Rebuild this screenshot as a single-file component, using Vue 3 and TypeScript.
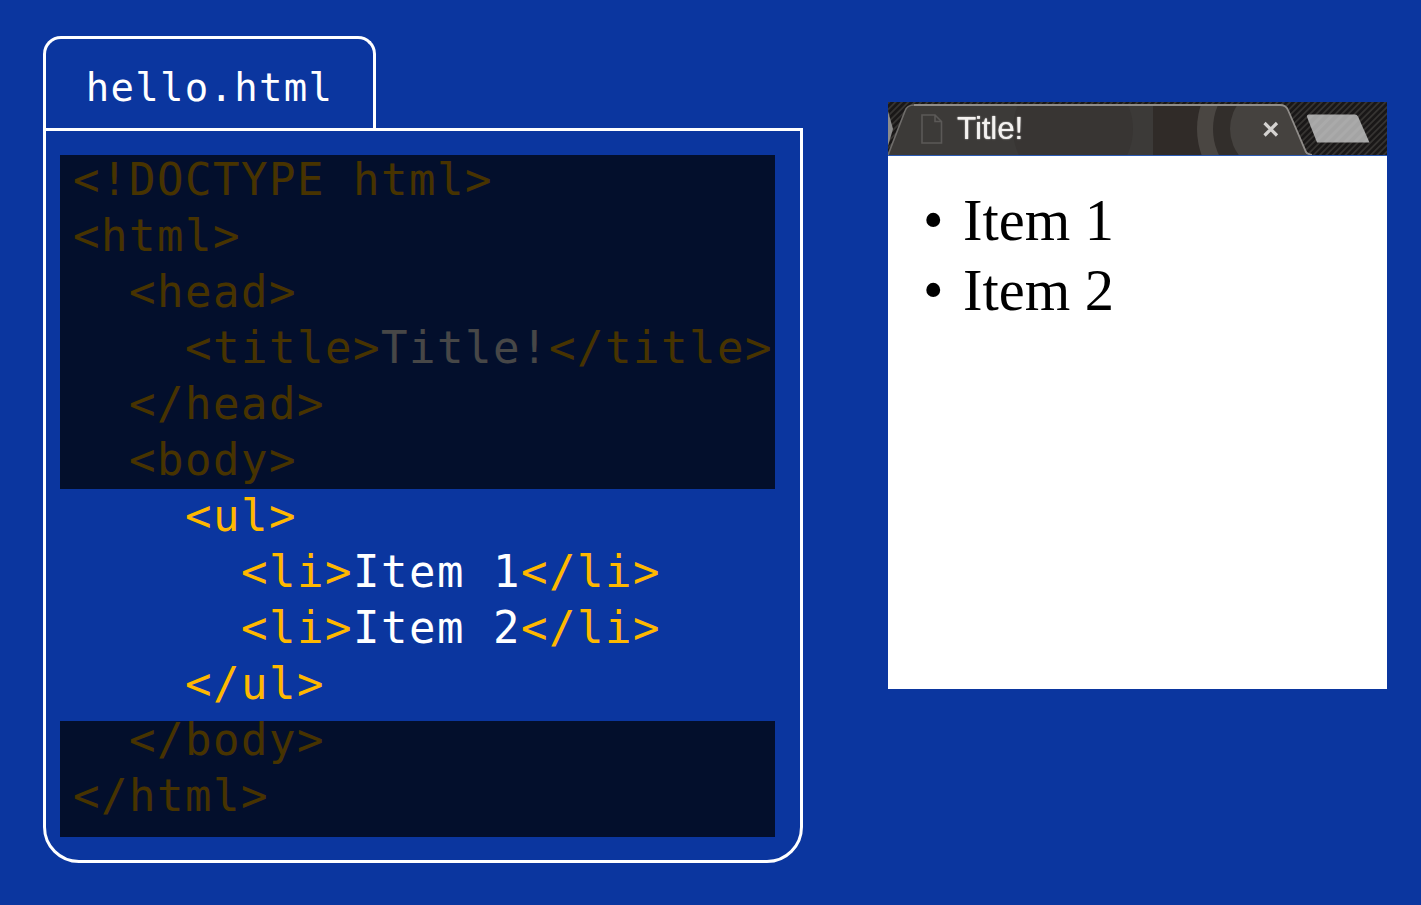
<script setup lang="ts">
interface Seg { text: string; kind: 'tag' | 'text' }
interface Line { indent: number; segs: Seg[] }
const t = (text: string): Seg => ({ text, kind: 'tag' })
const x = (text: string): Seg => ({ text, kind: 'text' })
const lines: Line[] = [
  { indent: 0, segs: [t('<!DOCTYPE html>')] },
  { indent: 0, segs: [t('<html>')] },
  { indent: 2, segs: [t('<head>')] },
  { indent: 4, segs: [t('<title>'), x('Title!'), t('</title>')] },
  { indent: 2, segs: [t('</head>')] },
  { indent: 2, segs: [t('<body>')] },
  { indent: 4, segs: [t('<ul>')] },
  { indent: 6, segs: [t('<li>'), x('Item 1'), t('</li>')] },
  { indent: 6, segs: [t('<li>'), x('Item 2'), t('</li>')] },
  { indent: 4, segs: [t('</ul>')] },
  { indent: 2, segs: [t('</body>')] },
  { indent: 0, segs: [t('</html>')] },
]
const items = ['Item 1', 'Item 2']
</script>

<template>
  <div class="page">
    <section class="editor">
      <div class="tab">hello.html</div>
      <div class="file">
        <pre class="code"><div v-for="(line, i) in lines" :key="i" class="line" :style="{ paddingLeft: line.indent * 28 + 'px' }"><span v-for="(seg, j) in line.segs" :key="j" :class="seg.kind">{{ seg.text }}</span></div></pre>
        <div class="shade shade-top"></div>
        <div class="shade shade-bottom"></div>
      </div>
    </section>

    <section class="browser">
      <div class="chrome">
        <svg class="chrome-art" viewBox="0 0 499 53" width="499" height="53" aria-hidden="true">
          <defs>
            <pattern id="stripes" width="4.500" height="4.500" patternUnits="userSpaceOnUse" patternTransform="rotate(45)">
              <rect width="4.500" height="4.500" fill="#191717" />
              <rect width="1.800" height="4.500" fill="#353331" />
            </pattern>
            <pattern id="btn" width="7" height="7" patternUnits="userSpaceOnUse" patternTransform="rotate(45)">
              <rect width="7" height="7" fill="#a4a4a4" />
              <rect width="3" height="7" fill="#aaaaaa" />
            </pattern>
            <clipPath id="tabclip"><path d="M0 53 L17 9 Q19 3 26 3 L392 3 Q398 3 400 8 L420 53 Z" /></clipPath>
          </defs>
          <rect width="499" height="53" fill="url(#stripes)" />
          <path d="M0 9 L5 27 L0 44 Z" fill="#8c8c8c" />
          <g clip-path="url(#tabclip)">
            <rect width="499" height="53" fill="#3c3a38" />
            <circle cx="185" cy="27" r="60" fill="#383533" />
            <rect x="265" width="80" height="53" fill="#302b28" />
            <circle cx="385" cy="27" r="76" fill="#4a4642" />
            <circle cx="385" cy="27" r="60" fill="#322e2b" />
            <circle cx="385" cy="27" r="43" fill="#45423f" />
          </g>
          <path d="M0 53 L17 9 Q19 3 26 3" fill="none" stroke="#6f6d6b" stroke-width="1.600" />
          <path d="M26 3 L392 3 Q398 3 400 8 L418 50 Q419 52 424 53" fill="none" stroke="#8f8c89" stroke-width="1.800" />
          <path d="M34 13 H47 L53.500 19.500 V41 H34 Z M47 13 V19.500 H53.500" fill="none" stroke="#5b5957" stroke-width="1.600" />
          <path d="M376.500 21 L389 33.500 M389 21 L376.500 33.500" stroke="#d4d2d0" stroke-width="3.200" />
          <path d="M421 12.500 H467 Q469 12.500 470 14.500 L481.500 40.500 H429 L419 15 Q418.500 12.500 421 12.500 Z" fill="url(#btn)" />
        </svg>
        <span class="title">Title!</span>
      </div>
      <div class="viewport">
        <ul class="list">
          <li v-for="item in items" :key="item" class="item">{{ item }}</li>
        </ul>
      </div>
    </section>
  </div>
</template>

<style>
html, body { margin: 0; background: #0b369f; }
</style>

<style scoped>
.page {
  display: flex;
  align-items: flex-start;
  width: 1421px;
  height: 905px;
  padding: 36px 0 0 43px;
  box-sizing: border-box;
  background: #0b369f;
  overflow: hidden;
}
.editor { width: 760px; flex: none; }
.tab {
  width: 333px;
  height: 93px;
  box-sizing: border-box;
  border: 3px solid #fff;
  border-bottom: 0;
  border-radius: 18px 18px 0 0;
  color: #fff;
  font: 39px/98px "DejaVu Sans Mono", monospace;
  letter-spacing: 1.260px;
  text-align: center;
}
.file {
  position: relative;
  height: 735px;
  box-sizing: border-box;
  border: 3px solid #fff;
  border-radius: 0 0 36px 36px;
  margin-top: -1px;
}
.code {
  margin: 0;
  padding: 21px 0 0 27px;
  font: 44px/56px "DejaVu Sans Mono", monospace;
  letter-spacing: 1.510px;
  white-space: pre;
}
.line { height: 56px; }
.tag { color: #ffb800; }
.text { color: #fff; }
.shade {
  position: absolute;
  left: 14px;
  width: 715px;
  background: rgba(0, 0, 0, 0.72);
}
.shade-top { top: 24px; height: 334px; }
.shade-bottom { top: 590px; height: 116px; }

.browser {
  width: 499px;
  flex: none;
  margin: 66px 0 0 85px;
  background: #fff;
}
.chrome {
  position: relative;
  height: 53px;
  border-bottom: 1.500px solid #2a5ab4;
  overflow: hidden;
}
.chrome-art { display: block; filter: blur(0.6px); }
.title {
  position: absolute;
  left: 69px;
  top: 7px;
  color: #f4f2f0;
  font: 31.500px/38px "Liberation Sans", sans-serif;
  letter-spacing: -0.150px;
  text-shadow: 0 0 1.500px #f4f2f0;
  filter: blur(0.3px);
}
.viewport { height: 533px; }
.list {
  list-style: none;
  margin: 0;
  padding: 30px 0 0 75px;
  color: #000;
  font: 58.500px/70px "Liberation Serif", serif;
}
.item { position: relative; }
.item::before {
  content: "•";
  position: absolute;
  left: -40px;
}
</style>
